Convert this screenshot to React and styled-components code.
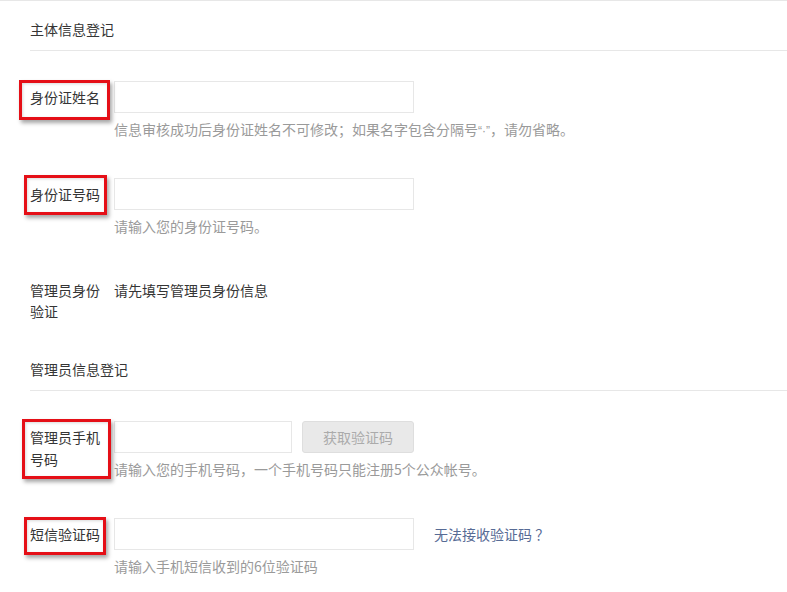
import React from "react";
import styled, { createGlobalStyle } from "styled-components";

const Global = createGlobalStyle`
  html, body { margin: 0; padding: 0; background: #fff; }
  body {
    font-family: "Noto Sans CJK SC", "Microsoft YaHei", "Liberation Sans", sans-serif;
    font-size: 14px;
    font-weight: 400;
    color: #353535;
  }
  * { box-sizing: border-box; }
`;

const Page = styled.div`
  border-top: 1px solid #e7e7e7;
  padding-left: 30px;
  width: 787px;
`;

const Section = styled.section`
  margin-top: ${(p) => p.$gap || 0}px;
`;

const SectionTitle = styled.h3`
  margin: 0;
  padding: 17px 0 10px;
  font-size: 14px;
  font-weight: 400;
  line-height: 22px;
  color: #353535;
  border-bottom: 1px solid #e7e7e7;
`;

const Rows = styled.div`
  display: flex;
  flex-direction: column;
  gap: 38px;
  padding-top: 30px;
`;

const Row = styled.div`
  position: relative;
  display: flex;
  align-items: flex-start;
`;

const Label = styled.label`
  width: 84px;
  flex: none;
  padding: 5px 10px 0 0;
  line-height: ${(p) => (p.$tight ? 21 : 22)}px;
  font-weight: 400;
  color: #353535;
`;

const Control = styled.div`
  display: flex;
  flex-direction: column;
`;

const Line = styled.div`
  display: flex;
  align-items: center;
`;

const Input = styled.input`
  width: ${(p) => p.$w || 300}px;
  height: 32px;
  border: 1px solid #e7e7e7;
  background: #fff;
  padding: 0 10px;
  font: inherit;
  outline: none;
  border-radius: 0;
`;

const CodeButton = styled.button`
  margin-left: 10px;
  width: 112px;
  height: 32px;
  border: 1px solid #dedede;
  background: #e9e9e9;
  color: #ababab;
  border-radius: 3px;
  font: inherit;
  font-size: 14px;
  padding: 0;
`;

const Hint = styled.p`
  margin: 5px 0 0;
  height: 22px;
  line-height: 22px;
  color: #9a9a9a;
  white-space: nowrap;
`;

const Latin = styled.span`
  font-family: "Liberation Sans", sans-serif;
  font-size: 12px;
  line-height: 1;
`;

const Value = styled.div`
  padding-top: 5px;
  line-height: 21px;
  font-weight: 400;
  color: #353535;
`;

const HelpLink = styled.a`
  margin-left: 20px;
  color: #576b95;
  text-decoration: none;
  line-height: 22px;
`;

const Mark = styled.span`
  position: absolute;
  left: ${(p) => p.$l}px;
  top: ${(p) => p.$t}px;
  width: ${(p) => p.$w}px;
  height: ${(p) => p.$h}px;
  border: 3px solid #e50f17;
  box-shadow: 2px 3px 4px rgba(0, 0, 0, 0.35), inset 1px 1px 3px rgba(0, 0, 0, 0.15);
  pointer-events: none;
`;

export default function App() {
  return (
    <>
      <Global />
      <Page>
        <Section>
          <SectionTitle>主体信息登记</SectionTitle>
          <Rows>
            <Row>
              <Label>身份证姓名</Label>
              <Control>
                <Input />
                <Hint>
                  信息审核成功后身份证姓名不可修改；如果名字包含分隔号<Latin>“·”</Latin>，请勿省略。
                </Hint>
              </Control>
              <Mark $l={-11} $t={-1} $w={91} $h={40} />
            </Row>
            <Row>
              <Label>身份证号码</Label>
              <Control>
                <Input />
                <Hint>请输入您的身份证号码。</Hint>
              </Control>
              <Mark $l={-6} $t={-3} $w={83} $h={40} />
            </Row>
            <Row>
              <Label $tight>管理员身份验证</Label>
              <Value>请先填写管理员身份信息</Value>
            </Row>
          </Rows>
        </Section>
        <Section $gap={19}>
          <SectionTitle>管理员信息登记</SectionTitle>
          <Rows>
            <Row>
              <Label>管理员手机号码</Label>
              <Control>
                <Line>
                  <Input $w={178} />
                  <CodeButton type="button">获取验证码</CodeButton>
                </Line>
                <Hint>请输入您的手机号码，一个手机号码只能注册5个公众帐号。</Hint>
              </Control>
              <Mark $l={-8} $t={-2} $w={89} $h={60} />
            </Row>
            <Row>
              <Label>短信验证码</Label>
              <Control>
                <Line>
                  <Input />
                  <HelpLink href="#">无法接收验证码 ？</HelpLink>
                </Line>
                <Hint>请输入手机短信收到的6位验证码</Hint>
              </Control>
              <Mark $l={-6} $t={-1} $w={82} $h={38} />
            </Row>
          </Rows>
        </Section>
      </Page>
    </>
  );
}
